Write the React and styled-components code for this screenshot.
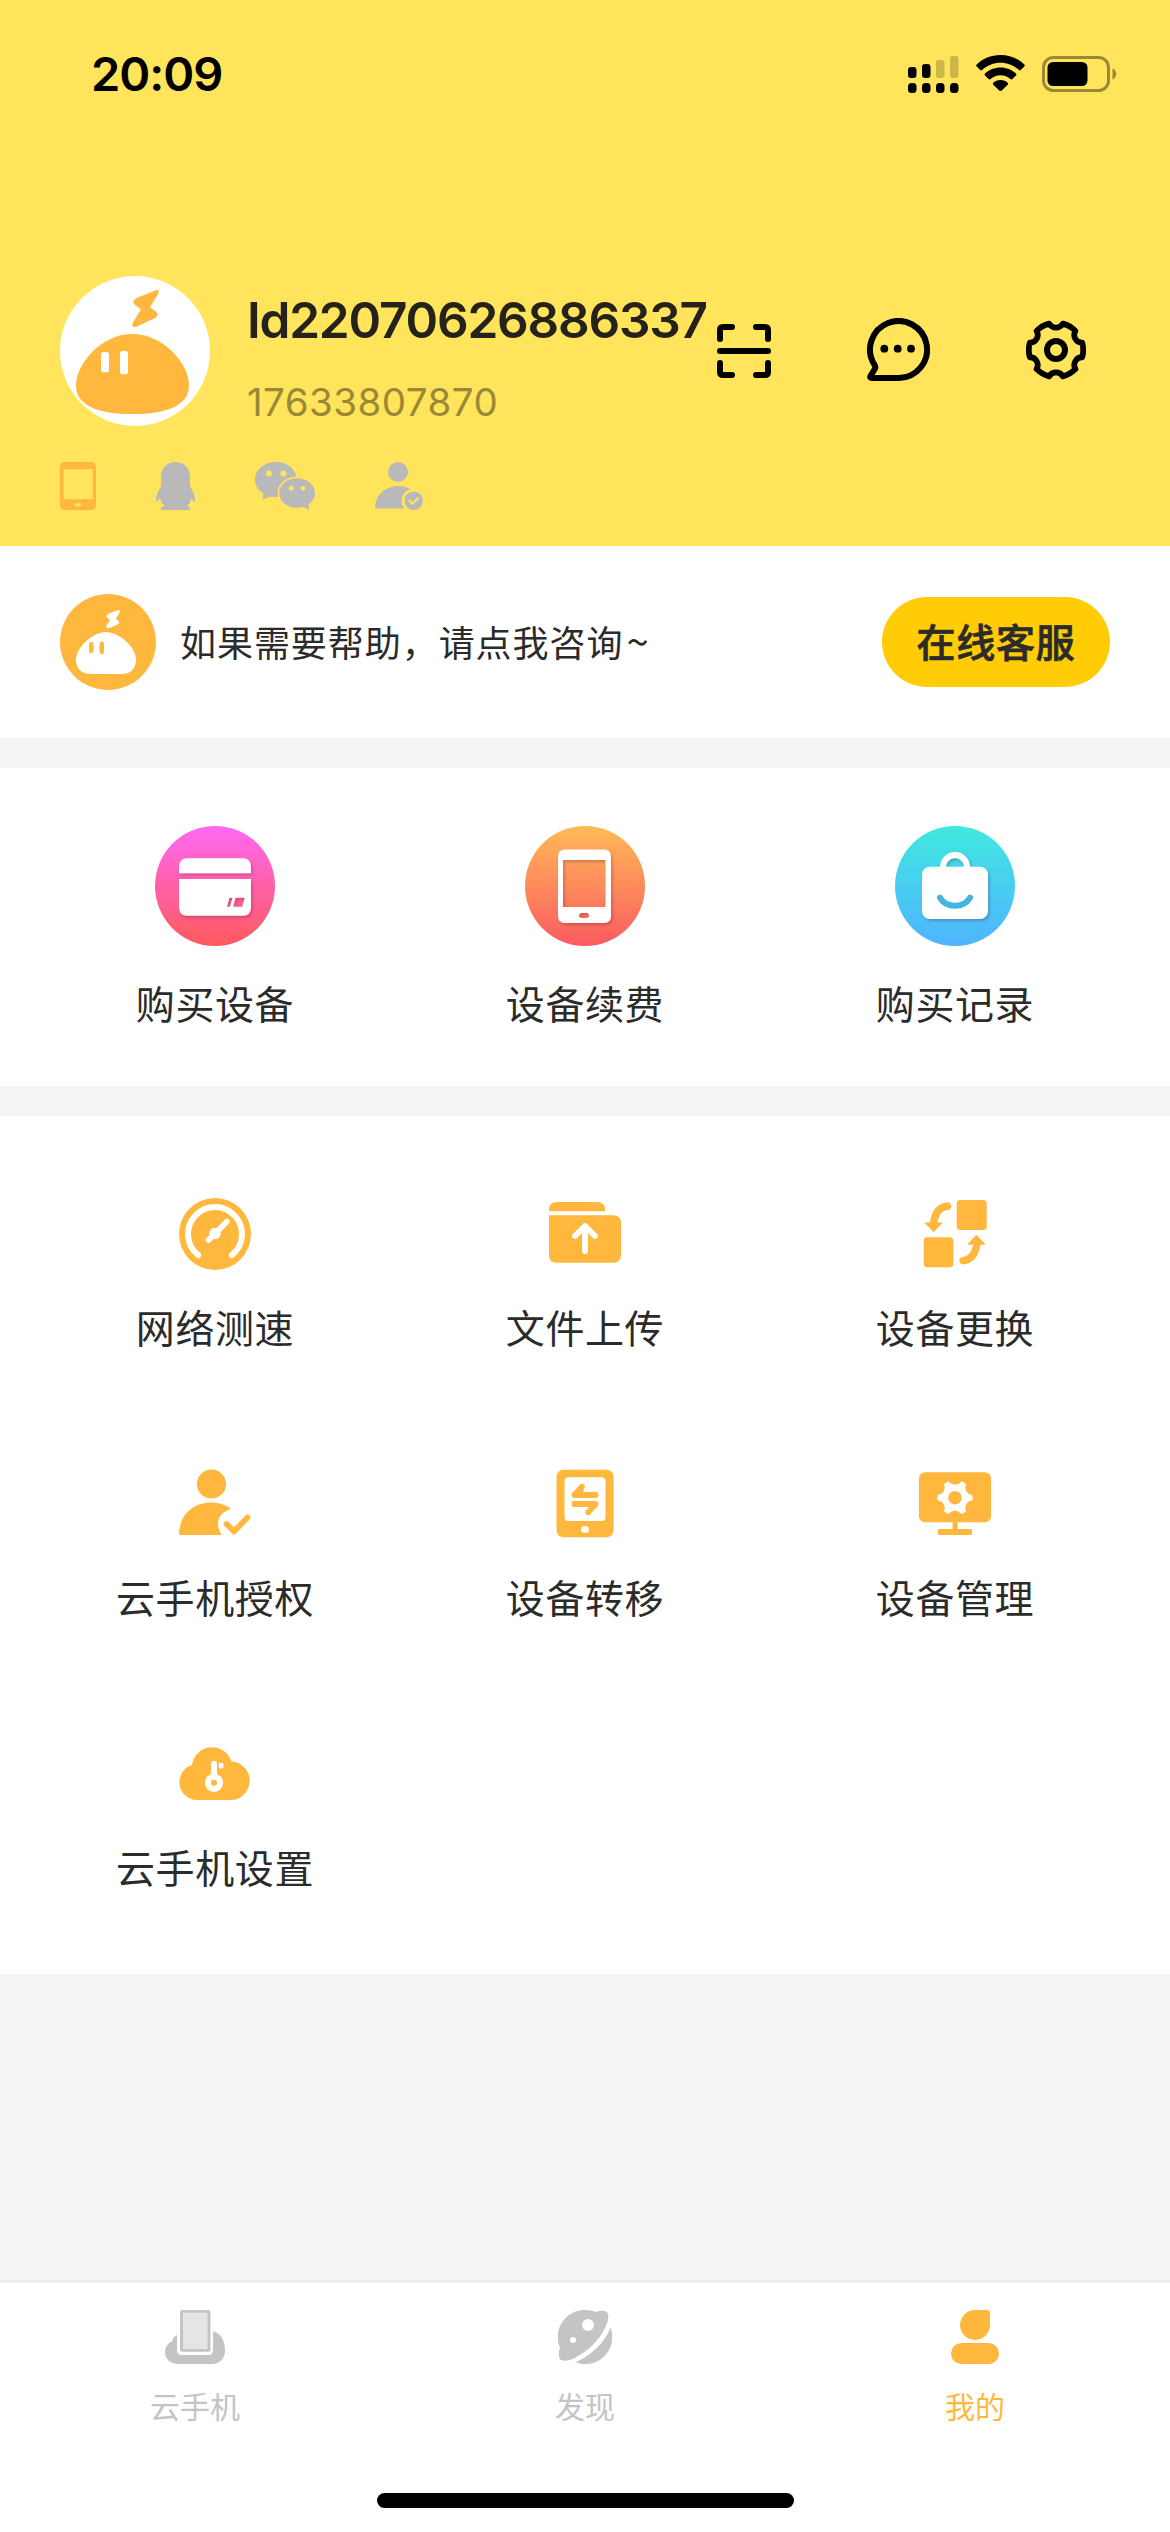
import React from "react";
import styled, { createGlobalStyle } from "styled-components";

const latin = `Inter, "Liberation Sans", sans-serif`;
const cjk = `"Noto Sans CJK SC", "Noto Sans", sans-serif`;
const color = {
  yellow: "#ffe45c",
  orange: "#ffb83d",
  muted: "#b9b9b9",
  tab: "#c4c4c4",
  text: "#2b2b2b",
  page: "#f4f4f4",
};

const GlobalStyle = createGlobalStyle`
  * { box-sizing: border-box; }
  body { margin: 0; background: ${color.page}; }
  svg { display: block; flex: none; }
`;

const Screen = styled.div`
  width: 1170px;
  height: 2532px;
  display: flex;
  flex-direction: column;
  background: ${color.page};
  overflow: hidden;
  font-family: ${cjk};
  color: ${color.text};
`;

const Header = styled.header`
  height: 546px;
  background: ${color.yellow};
  display: flex;
  flex-direction: column;
`;

const StatusBar = styled.div`
  height: 276px;
  padding: 45px 53px 0 91px;
  display: flex;
  align-items: flex-start;
  justify-content: space-between;
`;

const Clock = styled.time`
  font: 600 47px/58px ${latin};
  letter-spacing: -1px;
  color: #000;
`;

const StatusIcons = styled.div`
  display: flex;
  gap: 17px;
  padding-top: 10px;
`;

const Profile = styled.div`
  display: flex;
  align-items: center;
  height: 150px;
  padding-left: 60px;
`;

const Identity = styled.div`
  width: 507px;
  height: 150px;
  padding: 14px 0 0 37px;
  white-space: nowrap;
`;

const UserName = styled.div`
  font: 600 49.5px/60px ${latin};
  letter-spacing: -1.2px;
  color: #24221a;
`;

const Phone = styled.div`
  margin-top: 29px;
  font: 400 38.5px/46px ${latin};
  letter-spacing: 0.45px;
  color: #998937;
`;

const Actions = styled.div`
  display: flex;
  align-items: center;
  gap: 96px;
`;

const Bindings = styled.div`
  display: flex;
  gap: 60px;
  padding: 36px 60px 0;
`;

const Help = styled.section`
  height: 192px;
  padding: 0 60px;
  background: #fff;
  display: flex;
  align-items: center;
`;

const HelpText = styled.p`
  margin: 0 auto 0 24px;
  padding-bottom: 3px;
  font-size: 36px;
  line-height: 54px;
  letter-spacing: 0.95px;
  white-space: nowrap;
`;

const Tilde = styled.span`
  margin-left: 3px;
  font-size: 40px;
`;

const ServiceButton = styled.button`
  width: 228px;
  height: 90px;
  border: 0;
  border-radius: 45px;
  padding: 0 0 5px;
  background: #ffcc05;
  color: ${color.text};
  font: 500 39px/58px ${cjk};
  letter-spacing: 0.7px;
  -webkit-text-stroke: 0.7px ${color.text};
`;

const Panel = styled.section`
  margin-top: 30px;
  height: ${(p) => p.$height}px;
  padding: ${(p) => p.$top}px 30px 0;
  background: #fff;
  display: grid;
  grid-template-columns: repeat(3, 370px);
  grid-auto-rows: ${(p) => p.$row}px;
`;

const Entry = styled.div`
  display: flex;
  flex-direction: column;
  align-items: center;
  gap: 27px;
`;

const EntryLabel = styled.span`
  font-size: 39px;
  line-height: 58px;
  letter-spacing: 0.6px;
  white-space: nowrap;
`;

const TabBar = styled.nav`
  margin-top: auto;
  height: 252px;
  border-top: 3px solid #eee;
  background: #fff;
  display: flex;
  flex-direction: column;
  align-items: center;
`;

const Tabs = styled.div`
  display: grid;
  grid-template-columns: repeat(3, 390px);
  height: 210px;
  padding-top: 27px;
`;

const Tab = styled.div`
  display: flex;
  flex-direction: column;
  align-items: center;
  gap: 19px;
  color: ${(p) => (p.$active ? color.orange : color.tab)};
  font-size: 30px;
  line-height: 44px;
`;

const HomeIndicator = styled.div`
  width: 417px;
  height: 15px;
  border-radius: 7.5px;
  background: #000;
`;

const Icon = ({ w, h = w, children, ...rest }) => (
  <svg width={w} height={h} viewBox={`0 0 ${w} ${h}`} fill="none" {...rest}>
    {children}
  </svg>
);

/* Outline of a cog: rounded lobes separated by concave notches. */
const cog = (cx, cy, r, notchAngle, notchRadius, teeth = 6) => {
  const step = 360 / teeth;
  const at = (deg) => {
    const a = (deg * Math.PI) / 180;
    return `${(cx + r * Math.cos(a)).toFixed(2)} ${(cy + r * Math.sin(a)).toFixed(2)}`;
  };
  const lobe = step / 2 - notchAngle;
  let d = `M${at(-lobe)}`;
  for (let i = 0; i < teeth; i++) {
    d += `A${r} ${r} 0 0 1 ${at(i * step + lobe)}`;
    d += `A${notchRadius} ${notchRadius} 0 0 0 ${at((i + 1) * step - lobe)}`;
  }
  return d + "Z";
};

const Signal = () => (
  <Icon w={51} h={38} fill="#000">
    <rect x="0" y="12" width="8.5" height="11" rx="3" />
    <rect x="14" y="9" width="8.5" height="14" rx="3" />
    <rect x="28" y="5" width="8.5" height="18" rx="3" opacity=".2" />
    <rect x="42" y="1" width="8.5" height="22" rx="3" opacity=".2" />
    {[0, 14, 28, 42].map((x) => (
      <rect key={x} x={x} y="28" width="8.5" height="10" rx="3.5" />
    ))}
  </Icon>
);

const Wifi = () => (
  <Icon w={49} h={37} fill="#000">
    <path d="M24.5 0C34 0 42.500 3.700 48.300 9.500Q49.300 10.500 48.300 11.500L44.800 14.900Q43.800 15.800 42.800 14.900C38 10.400 31.500 7.700 24.500 7.700S11 10.400 6.200 14.900Q5.200 15.800 4.200 14.900L.7 11.500Q-.3 10.500 .7 9.500C6.500 3.700 15 0 24.500 0Z" />
    <path d="M24.500 12.500C30.500 12.500 36 14.800 40 18.600Q41 19.600 40 20.600L36.400 24Q35.400 24.900 34.400 24C31.800 21.700 28.300 20.300 24.500 20.300S17.200 21.700 14.600 24Q13.600 24.900 12.600 24L9 20.600Q8 19.600 9 18.600C13 14.800 18.500 12.500 24.500 12.500Z" />
    <path d="M24.500 25C27.300 25 29.800 26 31.700 27.700Q32.700 28.700 31.700 29.700L25.500 35.700Q24.500 36.500 23.500 35.700L17.300 29.700Q16.300 28.700 17.300 27.700C19.200 26 21.700 25 24.500 25Z" />
  </Icon>
);

const Battery = () => (
  <Icon w={75} h={38}>
    <rect x="1.500" y="2.500" width="65" height="33" rx="10" stroke="#000" strokeOpacity=".4" strokeWidth="3" />
    <rect x="5.500" y="7" width="40" height="24" rx="5.500" fill="#000" />
    <path d="M70.500 13.500C75.500 15.500 75.500 22.500 70.500 24.500Z" fill="#000" fillOpacity=".4" />
  </Icon>
);

const Avatar = () => (
  <svg width="150" height="150" viewBox="0 0 450 450">
    <circle cx="225" cy="225" r="225" fill="#fff" />
    <g fill={color.orange}>
      <path d="M217 174C310 174 387 262 387 329C387 388 320 414 217 414C114 414 48 388 48 329C48 262 125 174 217 174Z" />
      <path d="M284 44L230 66Q212 76 226 88L243 100L218 141Q213 156 229 152L284 127Q301 117 286 105L270 94L295 53Q300 38 284 44Z" />
    </g>
    <rect x="123" y="228" width="24" height="61" rx="8" fill="#fff" />
    <rect x="180" y="225" width="24" height="70" rx="8" fill="#fff" />
  </svg>
);

const Assistant = () => (
  <Icon w={96}>
    <circle cx="48" cy="48" r="48" fill={color.orange} />
    <path d="M46 38C59 38 76 53 76 66C76 74 71 80 62 80H31C21 80 16 74 16 66C16 53 33 38 46 38Z" fill="#fff" />
    <path d="M57.500 16.200L49 19.500Q44.500 22 48 24.500L50 26L46.300 32Q46 35 49 34.200L57.500 30.500Q60.500 28.500 57.500 26L55.800 24.500L60 18Q60.300 15.400 57.500 16.200Z" fill="#fff" />
    <rect x="29" y="48" width="4.500" height="11" rx="2" fill={color.orange} />
    <rect x="39.500" y="47.500" width="4.500" height="12.500" rx="2" fill={color.orange} />
  </Icon>
);

const Scan = () => (
  <Icon w={54} stroke="#000" strokeWidth="6" strokeLinecap="round">
    <path d="M3 15V6Q3 3 6 3H15M39 3H48Q51 3 51 6V15M51 39V48Q51 51 48 51H39M15 51H6Q3 51 3 48V39M3 27H51" />
  </Icon>
);

const Chat = () => (
  <Icon w={63} h={66}>
    <path d="M32 60A28.500 28.500 0 1 0 7.300 46.500Q9 49 7.800 51L3.500 58Q2.500 60 5 60Z" stroke="#000" strokeWidth="6" strokeLinejoin="round" />
    {[17.3, 30.7, 44].map((x) => (
      <circle key={x} cx={x} cy="30.700" r="3.900" fill="#000" />
    ))}
  </Icon>
);

const Settings = () => (
  <Icon w={60} h={62} stroke="#000">
    <path d={cog(30, 30, 27.2, 14.5, 7.8)} strokeWidth="5.800" strokeLinejoin="round" />
    <circle cx="30" cy="30" r="9" strokeWidth="6" />
  </Icon>
);

const BoundPhone = () => (
  <Icon w={36} h={48}>
    <path fill={color.orange} fillRule="evenodd" d="M5 0H31Q36 0 36 5V43Q36 48 31 48H5Q0 48 0 43V5Q0 0 5 0ZM3.500 7V37.300H32.700V7ZM16 41.200A1.600 1.600 0 0 0 16 44.400H20A1.600 1.600 0 0 0 20 41.200Z" />
  </Icon>
);

const Penguin = () => (
  <Icon w={39} h={48}>
    <path fill={color.muted} d="M19.500 0C29 0 34 7 34 15V24C36 28 39 33 39 38C39 40 38 40 37 38.500L35.500 36C35 39 33.500 42 31 44C34 45 34.500 46 34 48H5C4.500 46 5 45 8.500 44C6 42 4.500 39 4 36L2 38.500C.5 40 0 39.500 0 37.500C0 33 3 28 5 24V15C5 7 10 0 19.500 0Z" />
  </Icon>
);

const WeChat = () => (
  <Icon w={60} h={48}>
    <path fill={color.muted} d="M21 0C32.500 0 41.700 7.800 41.700 17.500S32.500 35 21 35C19 35 17.300 34.800 15.500 34.400L7.500 37.500L8.500 31.500C3.500 28.500 0 23.500 0 17.500C0 7.800 9.500 0 21 0Z" />
    <ellipse cx="42" cy="31" rx="19.500" ry="16.500" fill={color.yellow} />
    <path fill={color.muted} d="M42 16.200C52 16.200 60 22.800 60 31C60 35.500 57.500 39.500 53.500 42.300L54 47.700L48.500 45C46.500 45.500 44.300 45.800 42 45.800C32 45.800 24.200 39.200 24.200 31S32 16.200 42 16.200Z" />
    <g fill={color.yellow}>
      <circle cx="14" cy="11.500" r="3" />
      <circle cx="28.500" cy="11.500" r="3" />
      <circle cx="36.300" cy="26.300" r="2.400" />
      <circle cx="48" cy="26.300" r="2.400" />
    </g>
  </Icon>
);

const Verified = () => (
  <Icon w={48}>
    <circle cx="23" cy="10" r="10" fill={color.muted} />
    <path fill={color.muted} d="M1 46.500Q0 46.500 0 45C1 32 11 24 23 24C31 24 37 27 42 33L30 46.500Z" />
    <circle cx="38.700" cy="38.700" r="12" fill={color.yellow} />
    <circle cx="38.700" cy="38.700" r="9.300" fill={color.muted} />
    <path d="M34.200 38.500L37.500 41.700L43 36" stroke={color.yellow} strokeWidth="2" strokeLinecap="round" strokeLinejoin="round" />
  </Icon>
);

const Disc = ({ id, from, to, children }) => (
  <Icon w={120}>
    <defs>
      <linearGradient id={id} x1="0" y1="0" x2="0" y2="1">
        <stop stopColor={from} />
        <stop offset="1" stopColor={to} />
      </linearGradient>
      <filter id={`${id}-shadow`} x="-20%" y="-20%" width="140%" height="140%">
        <feDropShadow dx="1.500" dy="2" stdDeviation="1.800" floodColor="#500020" floodOpacity=".25" />
      </filter>
    </defs>
    <circle cx="60" cy="60" r="60" fill={`url(#${id})`} />
    <g filter={`url(#${id}-shadow)`}>{children}</g>
  </Icon>
);

const BuyDevice = () => (
  <Disc id="buy" from="#ff69f4" to="#ff595c">
    <path fill="#fff" d="M24 47.300V41Q24 32.300 32.500 32.300H87.500Q96 32.300 96 41V47.300Z" />
    <path fill="#fff" fillRule="evenodd" d="M24 53H96V81Q96 89.700 87.500 89.700H32.500Q24 89.700 24 81ZM74.500 71.700L72 80.700H75L77.500 71.700ZM80.500 71.700L78.200 80.700H87.200L89.800 71.700Z" />
  </Disc>
);

const RenewDevice = () => (
  <Disc id="renew" from="#ffba57" to="#fb5b60">
    <path fill="#fff" fillRule="evenodd" d="M40 23.500H79Q86 23.500 86 30.500V90Q86 97 79 97H40Q33 97 33 90V30.500Q33 23.500 40 23.500ZM38 34V81H80.500V34ZM56.500 87A2.500 2.500 0 0 0 56.500 92H61.500A2.500 2.500 0 0 0 61.500 87Z" />
  </Disc>
);

const Orders = () => (
  <Disc id="orders" from="#40e8e0" to="#4fb4ff">
    <path d="M48 42V41A12 12 0 0 1 72 41V42" stroke="#fff" strokeWidth="6" />
    <rect x="27" y="40.700" width="66" height="52.300" rx="8" fill="#fff" />
    <path d="M45 71.700C51 82.300 69 82.300 75 71.700" stroke="#44b5df" strokeWidth="6" strokeLinecap="round" />
  </Disc>
);

const SpeedTest = () => (
  <Icon w={72}>
    <circle cx="36" cy="36" r="36" fill={color.orange} />
    <g stroke="#fff" strokeLinecap="round">
      <path d="M19.200 57.200A27 27 0 1 1 52.800 57.200" strokeWidth="6" />
      <path d="M29.600 42L48 23.500" strokeWidth="5.500" />
    </g>
    <circle cx="36" cy="35.500" r="5.700" fill="#fff" />
  </Icon>
);

const Upload = () => (
  <Icon w={72}>
    <path fill={color.orange} d="M0 13.300V12Q0 4 8 4H48Q56 4 56 12V13.300Z" />
    <path fill={color.orange} d="M0 17.300H64Q72 17.300 72 25V57Q72 64.700 64.500 64.700H7.500Q0 64.700 0 57Z" />
    <path d="M36 53V28M26 38L36 28L46 38" stroke="#fff" strokeWidth="5.800" strokeLinecap="round" strokeLinejoin="round" />
  </Icon>
);

const Swap = () => (
  <Icon w={72} fill={color.orange}>
    <rect x="37.700" y="2" width="30" height="30" rx="3.500" />
    <rect x="4.700" y="39.300" width="29.600" height="30" rx="3.500" />
    <path d="M5.300 24.500L11 24.300C12.500 14 17 5 29 4.300A4 4 0 0 1 29.500 12C22.500 12.500 20 17 18.500 24.300L24 24.500L14.700 34.300Z" />
    <path d="M66.700 46.500L61.500 46.700C60 57 55 66 43 66.500A4 4 0 0 1 42.700 59C49.500 58.500 52.500 54 54 46.700L48.300 46.500L57.300 36.700Z" />
  </Icon>
);

const Authorize = () => (
  <Icon w={72}>
    <circle cx="32.500" cy="16" r="14.600" fill={color.orange} />
    <path fill={color.orange} d="M1.500 67Q0 67 0 65C1 47 14 34.500 32 34.500C40 34.500 47 37 52 41C44 43 39 48.500 39 56C39 60 40.500 64 43 67Z" />
    <path d="M47.500 56L55 63.500L68.500 49.500" stroke={color.orange} strokeWidth="5.800" strokeLinecap="round" strokeLinejoin="round" />
  </Icon>
);

const Transfer = () => (
  <Icon w={72}>
    <rect x="7.500" y="1.700" width="57" height="67.600" rx="7" fill={color.orange} />
    <rect x="15.500" y="9.300" width="41" height="43.700" rx="4" fill="#fff" />
    <rect x="32" y="58.300" width="8" height="6.500" rx="3.200" fill="#fff" />
    <path fill={color.orange} d="M31 16.600Q33.500 14.500 35.500 17Q36.500 19 35 20.500L34 24H47.500Q49.500 24.200 49.500 27T47.500 30H25Q20.500 28.500 23.500 24.800Z" />
    <path fill={color.orange} d="M41 46.400Q38.500 48.500 36.500 46Q35.500 44 37 42.500L40 39H24.500Q22.500 38.800 22.500 36T24.500 33H47Q51.500 34.500 48.500 38.200Z" />
  </Icon>
);

const Manage = () => (
  <Icon w={72} fill={color.orange}>
    <rect x="0" y="4.300" width="72" height="50" rx="6" />
    <rect x="33.600" y="54" width="4.900" height="8" />
    <rect x="19" y="61" width="34" height="6" rx="1.500" />
    <path d={cog(36, 29.7, 17.2, 22, 8)} fill="#fff" stroke="#fff" strokeWidth="0.8" strokeLinejoin="round" />
    <circle cx="36" cy="29.700" r="6.800" />
  </Icon>
);

const CloudKey = () => (
  <Icon w={72} fill={color.orange}>
    <path d="M18 62A17.900 17.900 0 0 1 13 27A20.300 20.300 0 0 1 52.500 23.500A19.300 19.300 0 0 1 53 62Z" />
    <rect x="32" y="22.700" width="6" height="18" rx="3" fill="#fff" />
    <rect x="39.700" y="25" width="4.700" height="5.500" rx="1" fill="#fff" />
    <circle cx="35" cy="44.800" r="9.100" fill="#fff" />
    <circle cx="35" cy="44.800" r="3" />
  </Icon>
);

const CloudPhoneTab = () => (
  <Icon w={60} h={54} fill={color.tab}>
    <path d="M12 25C9 26 8 28 7.500 31C3 33 0 37 0 42C0 49 5 54 13 54H47C55 54 60 48 60 41C60 31 56 23 48 21.500V40Q48 45 43 45H17Q12 45 12 40Z" />
    <rect x="15" y="0" width="30.500" height="41.700" rx="2.500" />
    <rect x="18" y="2.700" width="24.500" height="36.300" fill="#e5e5e5" />
  </Icon>
);

const DiscoverTab = () => (
  <Icon w={54} fill={color.tab}>
    <path fillRule="evenodd" d="M27 0C31 0 35 .8 38 2C42 .8 46 .3 48.500 1.800C52 5 50 12 47 18C42 29 31 40 20 46C14 50 7 52 3 50C0 47 .5 42 2 38A27 27 0 0 1 27 0ZM30 9A6 6 0 1 0 30 21A6 6 0 1 0 30 9ZM15 27A3 3 0 1 0 15 33A3 3 0 1 0 15 27Z" />
    <path d="M52.500 17.500A27 27 0 0 1 17.500 52.300C32 46 47 33 52.500 17.500Z" />
  </Icon>
);

const MineTab = () => (
  <Icon w={48} h={54} fill={color.orange}>
    <path d="M24 0H36Q39 0 39 3V15A15 15 0 1 1 24 0Z" />
    <rect x="0" y="33" width="48" height="21" rx="10.500" />
  </Icon>
);

const purchases = [
  ["购买设备", BuyDevice],
  ["设备续费", RenewDevice],
  ["购买记录", Orders],
];

const tools = [
  ["网络测速", SpeedTest],
  ["文件上传", Upload],
  ["设备更换", Swap],
  ["云手机授权", Authorize],
  ["设备转移", Transfer],
  ["设备管理", Manage],
  ["云手机设置", CloudKey],
];

const tabs = [
  ["云手机", CloudPhoneTab],
  ["发现", DiscoverTab],
  ["我的", MineTab],
];

const Entries = ({ items }) =>
  items.map(([label, Glyph]) => (
    <Entry key={label}>
      <Glyph />
      <EntryLabel>{label}</EntryLabel>
    </Entry>
  ));

export default function App() {
  return (
    <Screen>
      <GlobalStyle />
      <Header>
        <StatusBar>
          <Clock>20:09</Clock>
          <StatusIcons>
            <Signal />
            <Wifi />
            <Battery />
          </StatusIcons>
        </StatusBar>
        <Profile>
          <Avatar />
          <Identity>
            <UserName>Id22070626886337</UserName>
            <Phone>17633807870</Phone>
          </Identity>
          <Actions>
            <Scan />
            <Chat />
            <Settings />
          </Actions>
        </Profile>
        <Bindings>
          <BoundPhone />
          <Penguin />
          <WeChat />
          <Verified />
        </Bindings>
      </Header>
      <Help>
        <Assistant />
        <HelpText>
          如果需要帮助，请点我咨询<Tilde>~</Tilde>
        </HelpText>
        <ServiceButton>在线客服</ServiceButton>
      </Help>
      <Panel $height={318} $top={58} $row={207}>
        <Entries items={purchases} />
      </Panel>
      <Panel $height={858} $top={82} $row={270}>
        <Entries items={tools} />
      </Panel>
      <TabBar>
        <Tabs>
          {tabs.map(([label, Glyph]) => (
            <Tab key={label} $active={label === "我的"}>
              <Glyph />
              <span>{label}</span>
            </Tab>
          ))}
        </Tabs>
        <HomeIndicator />
      </TabBar>
    </Screen>
  );
}
